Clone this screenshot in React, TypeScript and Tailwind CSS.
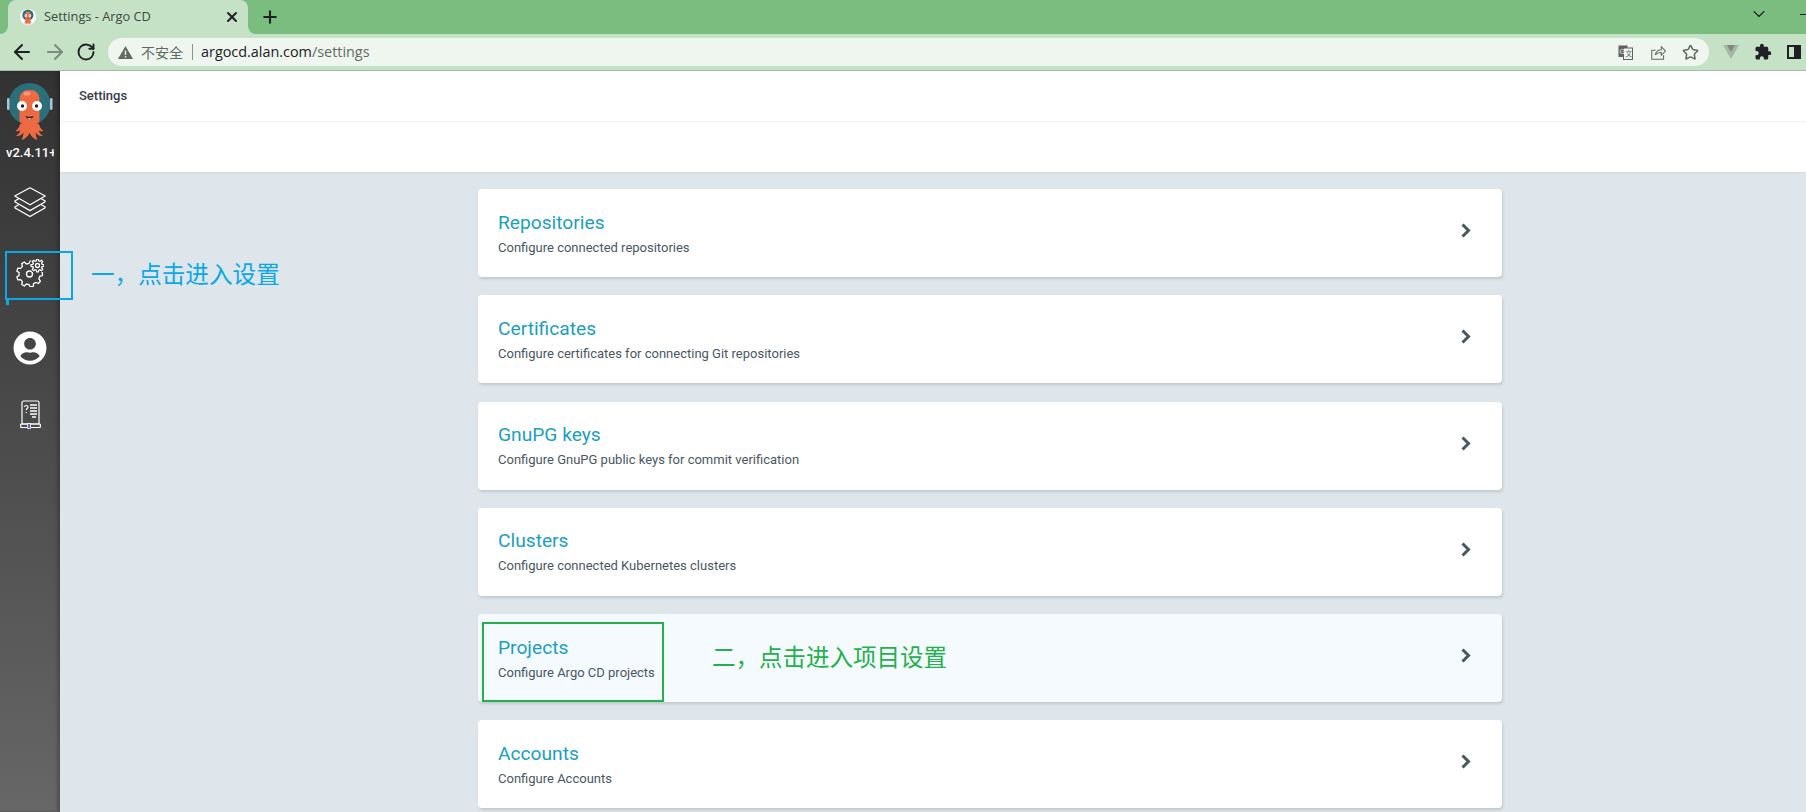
import { ArrowLeft, ArrowRight, ChevronDown, Plus, RotateCw, Star, X } from "lucide-react"
import { FaUserCircle } from "react-icons/fa"
import { MdExtension } from "react-icons/md"

const cards = [
  { title: "Repositories", description: "Configure connected repositories" },
  { title: "Certificates", description: "Configure certificates for connecting Git repositories" },
  { title: "GnuPG keys", description: "Configure GnuPG public keys for commit verification" },
  { title: "Clusters", description: "Configure connected Kubernetes clusters" },
  { title: "Projects", description: "Configure Argo CD projects", hover: true },
  { title: "Accounts", description: "Configure Accounts" },
]

function ArgoLogo({ className }: { className?: string }) {
  return (
    <svg className={className} viewBox="0 0 46 60">
      <circle cx="22.500" cy="23" r="21" fill="#2b6f78" />
      <rect x="0" y="17" width="2.500" height="12" rx="1.200" fill="#a9c4d4" />
      <rect x="43" y="17" width="2.500" height="12" rx="1.200" fill="#a9c4d4" />
      <path d="M12.500 19c0-7 4-10 10-10s10 3 10 10v20c0 3-3 5-10 5s-10-2-10-5z" fill="#ee6a43" />
      <path d="M13 43c-.5 3-2 5-4.500 7 2 .6 3.500.2 5-.5-1 2.500-2.500 4-4.500 5.500 3 .5 5.500-.8 7.500-3.500-.2 3-.8 5-2 7.500 3-.5 6-3 8-7 2 4 5 6.500 8 7-1.200-2.500-1.800-4.500-2-7.500 2 2.700 4.500 4 7.500 3.500-2-1.500-3.500-3-4.500-5.500 1.500.7 3 1.100 5 .5-2.500-2-4-4-4.500-7z" fill="#ee6a43" />
      <circle cx="15" cy="25" r="5" fill="#fff" />
      <circle cx="30" cy="25" r="5" fill="#fff" />
      <circle cx="15.500" cy="25" r="1.700" fill="#222" />
      <circle cx="29.500" cy="25" r="1.700" fill="#222" />
      <path d="M18.500 35c2 1 6 1 8 0-1 4-7 4-8 0z" fill="#222" />
      <path d="M20.500 37h4l-2 1z" fill="#fff" />
      <ellipse cx="20" cy="12.500" rx="3.500" ry="2" fill="#f59a7c" />
    </svg>
  )
}

function gearPath(cx: number, cy: number, outer: number, inner: number, n: number) {
  const points: string[] = []
  const step = (Math.PI * 2) / n
  for (let i = 0; i < n; i++) {
    const a = i * step
    const corners = [
      [inner, a - step * 0.32],
      [outer, a - step * 0.17],
      [outer, a + step * 0.17],
      [inner, a + step * 0.32],
    ]
    corners.forEach(([r, t]) => {
      points.push(`${(cx + Math.cos(t) * r).toFixed(2)} ${(cy + Math.sin(t) * r).toFixed(2)}`)
    })
  }
  return `M${points.join("L")}Z`
}

function GearsIcon({ className }: { className?: string }) {
  return (
    <svg className={className} viewBox="0 0 28 28" fill="none" stroke="#fff" strokeWidth="1.300">
      <path d={gearPath(13.500, 15, 13, 10.500, 9)} />
      <circle cx="13.500" cy="15" r="3" />
      <circle cx="21.500" cy="6.500" r="8" fill="#3c3c3c" stroke="none" />
      <path d={gearPath(21.500, 6.500, 6.500, 4.800, 8)} />
      <circle cx="21.500" cy="6.500" r="2" />
    </svg>
  )
}

function LayersIcon({ className }: { className?: string }) {
  return (
    <svg className={className} viewBox="0 0 32 30" fill="none" stroke="#fff" strokeWidth="1.300" strokeLinejoin="round">
      <path d="M16 .8L31.200 9 16 17.800 .8 9z" />
      <path d="M5 11.500L.8 14c0 .6.200 1 .8 1.300L16 23.600l14.400-8.300c.6-.3.8-.7.8-1.300L27 11.500" />
      <path d="M5 17.500L.8 20c0 .6.200 1 .8 1.300L16 29.500l14.400-8.200c.6-.3.8-.7.8-1.300L27 17.500" />
    </svg>
  )
}

function DocsIcon({ className }: { className?: string }) {
  return (
    <svg className={className} viewBox="0 0 21 29" fill="none" stroke="#fff" strokeWidth="1.200">
      <path d="M2 24V2.500C2 1.500 2.500 1 3.500 1h14c1 0 1.500.5 1.500 1.500V24z" />
      <path d="M.7 24h19.600M.7 27.500h6.300M11 27.500h9.300M.7 24v3.500M20.300 24v3.500" />
      <path d="M4.500 7c.3-2 3.500-2 3.500 0 0 1.500-1.800 1.500-1.800 3.200M6.200 12v1" />
      <path d="M10 5h7M10 8h7M10 11h7M10 14h7M12 17h4" strokeWidth="1.300" />
      <rect x="7.500" y="23.500" width="3" height="5" fill="#5865c8" stroke="#fff" strokeWidth="0.800" />
    </svg>
  )
}

function TranslateIcon() {
  return (
    <svg className="w-[15px] h-[15px]" viewBox="0 0 15 15">
      <rect x="0.500" y="0.500" width="9" height="11.500" fill="#616161" />
      <rect x="5.500" y="3" width="9" height="11.500" fill="#eff6ef" stroke="#616161" />
      <text x="1.500" y="8.500" fontSize="7" fill="#eff6ef" fontFamily="Liberation Sans, sans-serif">G</text>
      <text x="7.500" y="11" fontSize="6.500" fill="#616161" fontFamily="Noto Sans CJK SC, sans-serif">文</text>
    </svg>
  )
}

function ShareIcon() {
  return (
    <svg className="w-[15px] h-[15px]" viewBox="0 0 16 16" fill="none" stroke="#5f6b60" strokeWidth="1.100">
      <path d="M5 5.500H.8v9.700h12.600v-4.200" />
      <path d="M4.500 10.500c.8-4 3.700-5.500 6.500-5.500V1.800l4.500 4.700L11 11V8c-3 0-5 .5-6.500 2.500z" />
    </svg>
  )
}

function BrowserChrome() {
  return (
    <div className="h-[71px] shrink-0 bg-[#c5e1c6] border-b border-[#a4bca5] font-['Open_Sans','Noto_Sans_CJK_SC',sans-serif]">
      <div className="h-[34px] flex bg-[linear-gradient(to_bottom,#7bbd7e_50%,#c5e1c6_50%)]">
        <div className="w-2 bg-[#7bbd7e] rounded-br-lg" />
        <div className="w-[240px] bg-[#c5e1c6] rounded-t-lg flex items-center pl-3 pr-2 text-[12.800px] text-[#3c4a3d]">
          <ArgoLogo className="w-4 h-4 mr-2 rounded-full bg-white" />
          <span className="flex-1 truncate">Settings - Argo CD</span>
          <X className="w-4 h-4 text-[#202124]" strokeWidth={3} />
        </div>
        <div className="flex-1 bg-[#7bbd7e] rounded-bl-lg flex items-start pt-[4px]">
          <Plus className="w-5 h-5 ml-3 mt-[3px] text-[#202124]" strokeWidth={2.500} />
          <div className="flex-1" />
          <ChevronDown className="w-5 h-5 text-[#202124]" strokeWidth={1.300} />
          <div className="w-[6px] h-px ml-[31px] mt-[10px] bg-[#202124]" />
        </div>
      </div>
      <div className="h-[36px] flex items-center">
        <ArrowLeft className="w-6 h-6 ml-[10px] text-[#202124]" strokeWidth={2} />
        <ArrowRight className="w-6 h-6 ml-[9px] text-[#7d8a7e]" strokeWidth={2} />
        <RotateCw className="w-5 h-5 ml-[9px] text-[#202124]" strokeWidth={2.300} />
        <div className="ml-[12px] w-[1601px] h-[28px] bg-[#eff6ef] rounded-full flex items-center pl-[10px] text-[14.400px]">
          <svg className="w-[15px] h-[13px] mr-[8px]" viewBox="0 0 15 13">
            <path d="M7.500 0L15 13H0z" fill="#5f6b60" />
            <path d="M6.800 4.500h1.400v4.500H6.800zM6.800 10h1.400v1.400H6.800z" fill="#eff6ef" />
          </svg>
          <span className="text-[14px] text-[#5f6b60]">不安全</span>
          <span className="w-px h-4 bg-[#8b958c] mx-[9px]" />
          <span className="text-[#202124] -ml-px">argocd.alan.com</span>
          <span className="text-[#5f6b60]">/settings</span>
          <div className="flex-1" />
          <div className="flex items-center gap-[17px] pr-[10px]">
            <TranslateIcon />
            <span className="ml-px"><ShareIcon /></span>
            <Star className="w-[17px] h-[17px] text-[#5f6b60] -ml-px" strokeWidth={2.200} />
          </div>
        </div>
        <svg className="ml-[14px] w-[16px] h-[14px]" viewBox="0 0 16 14">
          <path d="M0 0h16L8 14z" fill="#a9b4aa" />
          <path d="M4 0h8L8 7z" fill="#7f8a80" />
        </svg>
        <MdExtension className="ml-[15px] w-[18px] h-[18px] text-[#202124]" />
        <div className="ml-[15px] w-[14px] h-[14px] border-2 border-[#202124] border-r-[7px]" />
      </div>
    </div>
  )
}

function Sidebar() {
  return (
    <div className="w-[60px] shrink-0 bg-gradient-to-b from-[#323232] to-[#676767] flex flex-col items-center shadow-[inset_-3px_0_3px_rgba(0,0,0,0.2)]">
      <ArgoLogo className="w-[46px] h-[60px] mt-[10px]" />
      <div className="w-[48px] overflow-hidden text-white text-[13px] font-medium leading-[16px] whitespace-nowrap mt-1">
        v2.4.11+
      </div>
      <LayersIcon className="w-8 h-[30px] mt-[26px]" />
      <GearsIcon className="w-7 h-7 mt-[42px]" />
      <FaUserCircle className="w-[34px] h-[34px] mt-[44px] text-white" />
      <DocsIcon className="w-[21px] h-[29px] mt-[35px]" />
    </div>
  )
}

export default function App() {
  return (
    <div className="relative w-[1806px] h-[812px] overflow-hidden flex flex-col bg-[#dee6eb] font-['Roboto','Noto_Sans_CJK_SC',sans-serif]">
      <BrowserChrome />
      <div className="flex-1 flex min-h-0">
        <Sidebar />
        <div className="flex-1 min-w-0">
          <div className="bg-white h-[101px] shadow-[0_1px_2px_rgba(0,0,0,0.05)]">
            <div className="h-[51px] border-b border-[#eff2f4] flex items-center pl-[19px] text-[13px] font-medium text-[#363c4a]">
              Settings
            </div>
          </div>
          <div className="w-[1024px] ml-[418px] mt-[17px] flex flex-col gap-[18.25px]">
            {cards.map((card) => (
              <div
                key={card.title}
                className={`h-[88px] shrink-0 rounded-[4px] shadow-[1px_2px_3px_rgba(0,0,0,0.13)] flex items-center pl-5 pr-[31px] ${card.hover ? "bg-[#f4fafd]" : "bg-white"}`}
              >
                <div className="flex-1 mt-[1px]">
                  <div className="text-[19.200px] leading-[24px] text-[#1a9fbd]">{card.title}</div>
                  <div className="text-[13px] leading-[18px] mt-[4px] text-[#495763]">{card.description}</div>
                </div>
                <svg className="w-[10px] h-[15px] mb-[5px]" viewBox="0 0 10 15" fill="none" stroke="#495763" strokeWidth="3">
                  <path d="M1.500 1.500L7.500 7.500L1.500 13.500" />
                </svg>
              </div>
            ))}
          </div>
        </div>
      </div>

      {/* annotations drawn over the screenshot */}
      <div className="absolute left-[5px] top-[251px] w-[68px] h-[49px] border-2 border-[#0aa8e8]" />
      <div className="absolute left-[6px] top-[300px] w-[3px] h-[5px] bg-[#17a9c9]" />
      <div className="absolute left-[91px] top-[258px] text-[23.600px] leading-[34px] text-[#0aa8e8]">一，点击进入设置</div>
      <div className="absolute left-[482px] top-[622px] w-[182px] h-[80px] border-2 border-[#22b14c]" />
      <div className="absolute left-[712px] top-[641px] text-[23.500px] leading-[34px] text-[#22b14c]">二，点击进入项目设置</div>
    </div>
  )
}
